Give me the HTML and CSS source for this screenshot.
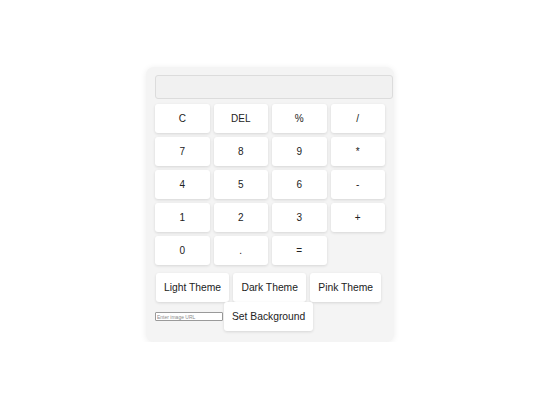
FILE: index.html
```html
<!DOCTYPE html>
<html>
<head>
<meta charset="utf-8">
<link rel="stylesheet" href="styles.css">
</head>
<body>
<div class="calc">
  <input class="display" type="text" readonly>
  <div class="keys">
    <button class="key">C</button>
    <button class="key">DEL</button>
    <button class="key">%</button>
    <button class="key">/</button>
    <button class="key">7</button>
    <button class="key">8</button>
    <button class="key">9</button>
    <button class="key">*</button>
    <button class="key">4</button>
    <button class="key">5</button>
    <button class="key">6</button>
    <button class="key">-</button>
    <button class="key">1</button>
    <button class="key">2</button>
    <button class="key">3</button>
    <button class="key">+</button>
    <button class="key">0</button>
    <button class="key">.</button>
    <button class="key">=</button>
  </div>
  <div class="themes">
    <button class="tbtn">Light Theme</button>
    <button class="tbtn">Dark Theme</button>
    <button class="tbtn">Pink Theme</button>
  </div>
  <div class="bgrow">
    <input class="url" type="text" placeholder="Enter image URL">
    <button class="tbtn setbg">Set Background</button>
  </div>
</div>
</body>
</html>
```
FILE: styles.css
```css
html, body {
  margin: 0;
  padding: 0;
  background: #ffffff;
  font-family: "Liberation Sans", Arial, sans-serif;
}
body {
  display: flex;
  justify-content: center;
  padding-top: 67px;
}
.calc {
  width: 230px;
  padding: 8px 9px 11px 9px;
  background: #f4f4f4;
  border-radius: 8px;
  box-shadow: 0 1px 6px rgba(0,0,0,0.08);
}
.display {
  display: block;
  box-sizing: border-box;
  width: 238px;
  height: 24px;
  margin: 0 0 5px 0;
  padding: 0 4px;
  border: 1px solid #dcdcdc;
  border-radius: 3px;
  background: #f1f1f1;
  outline: none;
}
.keys {
  display: grid;
  grid-template-columns: repeat(4, 1fr);
  grid-auto-rows: 29px;
  gap: 4px;
}
.key, .tbtn {
  font-family: "Liberation Sans", Arial, sans-serif;
  font-size: 10px;
  color: #222;
  background: #ffffff;
  border: none;
  border-radius: 3px;
  box-shadow: 0 1px 3px rgba(0,0,0,0.12);
  padding: 0;
  margin: 0;
}
.themes {
  display: flex;
  gap: 4.4px;
  margin: 8px 0 0 1px;
}
.tbtn {
  height: 29px;
  padding: 0 8px;
  font-size: 10.3px;
}
.bgrow {
  display: flex;
  align-items: center;
  gap: 1px;
}
.url {
  box-sizing: border-box;
  width: 68px;
  height: 9px;
  padding: 0 1px;
  margin: 0;
  font-family: "Liberation Sans", Arial, sans-serif;
  font-size: 5px;
  border: 1px solid #9a9a9a;
  border-radius: 1px;
  background: #fff;
}
.url::placeholder {
  color: #8a8a8a;
}
.setbg {
  padding: 0 8px;
}
```
